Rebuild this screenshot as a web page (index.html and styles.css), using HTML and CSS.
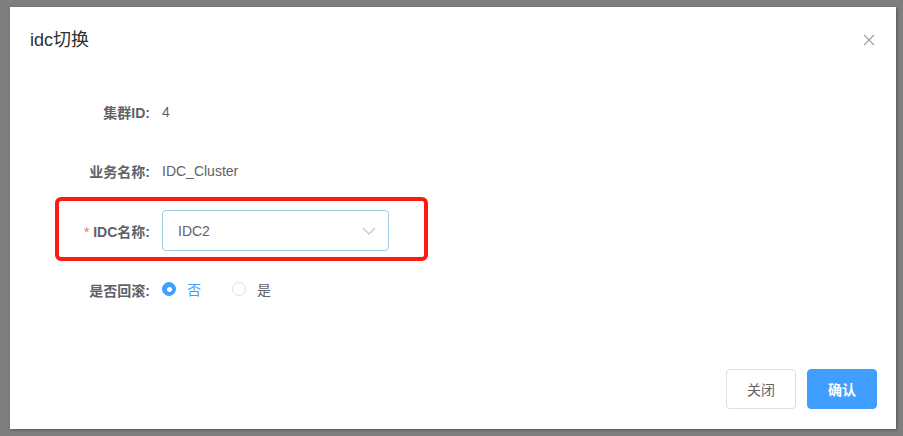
FILE: index.html
```html
<!DOCTYPE html>
<html lang="zh">
<head>
<meta charset="utf-8">
<title>idc切换</title>
<link rel="stylesheet" href="styles.css">
</head>
<body>
<div class="dialog">
  <div class="dialog-header">
    <span class="dialog-title">idc切换</span>
    <button class="close-btn" aria-label="Close">
      <svg width="12" height="12" viewBox="0 0 12 12"><path d="M1 1L11 11M11 1L1 11" stroke="#a0a3aa" stroke-width="1.3" fill="none"/></svg>
    </button>
  </div>
  <div class="dialog-body">
    <div class="form-item">
      <label class="form-label">集群ID:</label>
      <div class="form-content">4</div>
    </div>
    <div class="form-item">
      <label class="form-label">业务名称:</label>
      <div class="form-content">IDC_Cluster</div>
    </div>
    <div class="form-item highlighted">
      <label class="form-label"><span class="req">*</span> IDC名称:</label>
      <div class="form-content">
        <div class="select">
          <span class="select-value">IDC2</span>
          <svg class="chevron" width="14" height="8" viewBox="0 0 14 8"><path d="M1 1L7 7L13 1" stroke="#c0c4cc" stroke-width="1.2" fill="none"/></svg>
        </div>
      </div>
      <div class="annotation"></div>
    </div>
    <div class="form-item">
      <label class="form-label">是否回滚:</label>
      <div class="form-content radios">
        <span class="radio checked"><span class="radio-dot"></span><span class="radio-text">否</span></span>
        <span class="radio"><span class="radio-dot"></span><span class="radio-text">是</span></span>
      </div>
    </div>
  </div>
  <div class="dialog-footer">
    <button class="btn">关闭</button>
    <button class="btn primary">确认</button>
  </div>
</div>
</body>
</html>
```
FILE: styles.css
```css
* { box-sizing: border-box; }
html, body { margin: 0; height: 100%; }
body {
  background: #7f7f7f;
  padding: 7px 7px 7px 10px;
  font-family: "Liberation Sans", "Noto Sans CJK SC", sans-serif;
  font-size: 14px;
  color: #606266;
}
.dialog {
  width: 886px;
  height: 422px;
  background: #fff;
  box-shadow: 1px 1px 3px rgba(0,0,0,0.35);
  display: flex;
  flex-direction: column;
}
.dialog-header {
  padding: 21px 20px 10px 20px;
  display: flex;
  justify-content: space-between;
  align-items: center;
}
.dialog-title {
  font-size: 18px;
  line-height: 24px;
  color: #303133;
}
.close-btn {
  border: 0;
  background: none;
  padding: 0;
  margin-right: 1px;
  display: flex;
}
.dialog-body {
  padding: 30px 0 0 40px;
  display: flex;
  flex-direction: column;
  gap: 19.3px;
}
.form-item {
  display: flex;
  align-items: center;
  height: 40px;
  position: relative;
}
.form-label {
  width: 112px;
  padding-right: 12px;
  text-align: right;
  font-weight: bold;
  color: #606266;
  white-space: nowrap;
}
.req { color: #f56c6c; font-weight: normal; }
.form-content { display: flex; align-items: center; }
.select {
  width: 227px;
  height: 41px;
  border: 1px solid #9fcbe3;
  border-radius: 4px;
  display: flex;
  align-items: center;
  justify-content: space-between;
  padding: 0 12px 0 15px;
  color: #606266;
}
.chevron { margin-top: 1px; }
.annotation {
  position: absolute;
  left: 5px;
  top: -14px;
  width: 373px;
  height: 64px;
  border: 4px solid #fa1c10;
  border-radius: 6px;
}
.radios { gap: 31px; margin-top: -1px; }
.radio { display: flex; align-items: center; gap: 11px; color: #606266; }
.radio-dot {
  width: 14px;
  height: 14px;
  border-radius: 50%;
  border: 1px solid #dcdfe6;
  background: #fff;
}
.radio.checked .radio-dot {
  background: #409eff;
  border-color: #409eff;
  position: relative;
}
.radio.checked .radio-dot::after {
  content: "";
  position: absolute;
  left: 3.5px;
  top: 3.5px;
  width: 5px;
  height: 5px;
  border-radius: 50%;
  background: #fff;
}
.radio.checked .radio-text { color: #409eff; }
.dialog-footer {
  margin-top: auto;
  padding: 0 19px 20px 0;
  display: flex;
  justify-content: flex-end;
  gap: 11px;
}
.btn {
  width: 70px;
  height: 40px;
  border: 1px solid #dcdfe6;
  border-radius: 4px;
  background: #fff;
  color: #606266;
  font-family: inherit;
  font-size: 14px;
}
.btn.primary {
  background: #409eff;
  border-color: #409eff;
  color: #fff;
  font-weight: bold;
}
```
